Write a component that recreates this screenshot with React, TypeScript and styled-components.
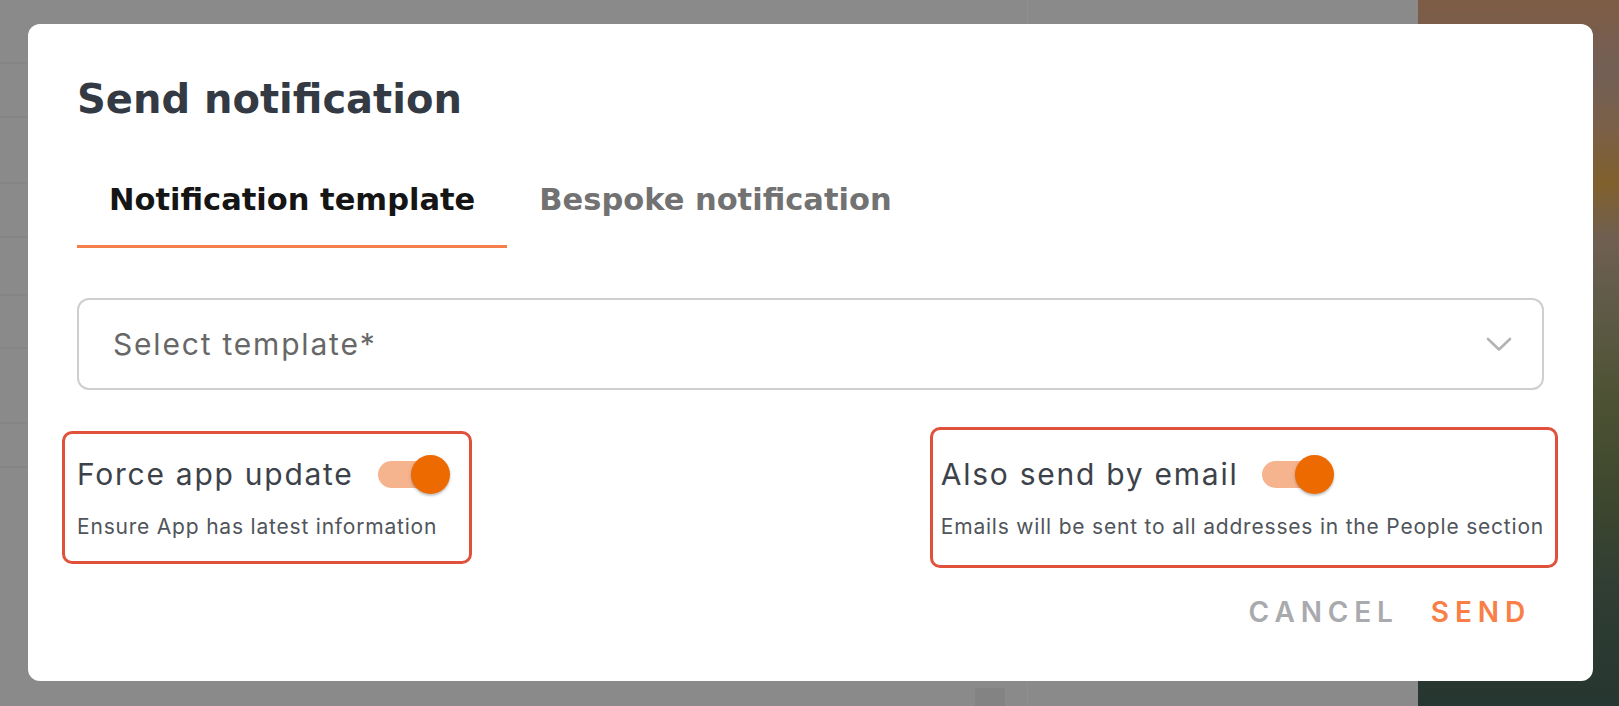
import React from "react";
import styled, { createGlobalStyle } from "styled-components";

const GlobalStyle = createGlobalStyle`
  html, body { margin: 0; padding: 0; height: 100%; overflow: hidden; }
  body { font-family: Inter, "Open Sans", sans-serif; }
  #root { height: 100%; }
  *, *::before, *::after { box-sizing: border-box; }
`;

const rowLine = (y: number) =>
  `linear-gradient(#858585, #858585) 0 ${y}px / 28px 2px no-repeat`;

const Backdrop = styled.div`
  width: 100vw;
  height: 100vh;
  display: flex;
  padding: 24px 26px 25px 28px;
  background:
    linear-gradient(
        to bottom,
        #7e5c45 0%,
        #725f55 10%,
        #7a6048 18%,
        #80602c 26%,
        #6f5f52 34%,
        #5e5a46 44%,
        #4e5234 56%,
        #40492e 68%,
        #2f3d33 84%,
        #263630 100%
      )
      right top / 201px 100% no-repeat,
    linear-gradient(#8f8f8f, #8f8f8f) 1027px 0 / 1px 100% no-repeat,
    linear-gradient(#838383, #838383) 975px 688px / 30px 18px no-repeat,
    ${rowLine(62)}, ${rowLine(116)}, ${rowLine(182)}, ${rowLine(236)},
    ${rowLine(294)}, ${rowLine(347)}, ${rowLine(422)}, ${rowLine(466)},
    #8a8a8a;
`;

const Dialog = styled.section`
  flex: 1;
  background: #ffffff;
  border-radius: 12px;
  padding: 52px 49px 0;
  display: flex;
  flex-direction: column;
`;

const Title = styled.h2`
  margin: 0;
  font-family: "DejaVu Sans", Verdana, sans-serif;
  font-size: 40px;
  line-height: 46px;
  font-weight: 700;
  color: #343a43;
`;

const Tabs = styled.div`
  display: flex;
  margin-top: 33px;
`;

const Tab = styled.button<{ $active?: boolean }>`
  border: 0;
  background: none;
  font-family: "DejaVu Sans", Verdana, sans-serif;
  cursor: pointer;
  padding: 28px 32px;
  font-size: 30.5px;
  line-height: 34px;
  font-weight: 700;
  color: ${(p) => (p.$active ? "#151515" : "#727272")};
  border-bottom: 3px solid ${(p) => (p.$active ? "#f57f4b" : "transparent")};
`;

const Select = styled.div`
  margin-top: 50px;
  height: 92px;
  display: flex;
  align-items: center;
  justify-content: space-between;
  padding: 0 30px 0 34px;
  border: 2px solid #cfcfcf;
  border-radius: 12px;
`;

const Placeholder = styled.span`
  font-size: 30px;
  letter-spacing: 0.06em;
  color: #676767;
`;

const Options = styled.div`
  display: flex;
  justify-content: space-between;
  align-items: center;
  margin: 37px -14px 0 -15px;
`;

const Highlight = styled.div<{ $pad: string }>`
  border: 3px solid #e0513c;
  border-radius: 10px;
  padding: ${(p) => p.$pad};
`;

const OptionHead = styled.div`
  display: flex;
  align-items: center;
  gap: 24px;
  height: 40px;
`;

const Label = styled.span`
  font-size: 30px;
  line-height: 40px;
  font-weight: 400;
  letter-spacing: 0.058em;
  color: #3d424a;
`;

const Helper = styled.div`
  margin-top: 19px;
  font-size: 21px;
  line-height: 28px;
  letter-spacing: 0.038em;
  color: #50545b;
`;

const Switch = styled.span`
  position: relative;
  display: inline-block;
  width: 72px;
  height: 39px;
`;

const Track = styled.span`
  position: absolute;
  left: 0;
  top: 6px;
  width: 65px;
  height: 27px;
  border-radius: 14px;
  background: #f5b48d;
`;

const Thumb = styled.span`
  position: absolute;
  left: 33px;
  top: 0;
  width: 39px;
  height: 39px;
  border-radius: 50%;
  background: #ec6a00;
  box-shadow: 0 2px 2px rgba(0, 0, 0, 0.18), 0 1px 4px rgba(0, 0, 0, 0.1);
`;

const Actions = styled.div`
  display: flex;
  justify-content: flex-end;
  gap: 4px;
  margin: 16px 0 0 0;
`;

const ActionButton = styled.button<{ $primary?: boolean }>`
  border: 0;
  background: none;
  cursor: pointer;
  font-family: inherit;
  padding: 11px 13px 11px 15px;
  font-size: 28px;
  line-height: 34px;
  font-weight: 600;
  letter-spacing: 0.21em;
  color: ${(p) => (p.$primary ? "#f97f47" : "#a8aaad")};
`;

const Chevron = () => (
  <svg width="26" height="15" viewBox="0 0 26 15" fill="none">
    <polyline
      points="2,2 13,12.5 24,2"
      stroke="#b3b3b3"
      strokeWidth="2.6"
      strokeLinecap="round"
      strokeLinejoin="round"
    />
  </svg>
);

const Toggle = () => (
  <Switch>
    <Track />
    <Thumb />
  </Switch>
);

export default function App() {
  return (
    <>
      <GlobalStyle />
      <Backdrop>
        <Dialog>
          <Title>Send notification</Title>
          <Tabs>
            <Tab $active>Notification template</Tab>
            <Tab>Bespoke notification</Tab>
          </Tabs>
          <Select>
            <Placeholder>Select template*</Placeholder>
            <Chevron />
          </Select>
          <Options>
            <Highlight $pad="20px 19px 20px 12px">
              <OptionHead>
                <Label>Force app update</Label>
                <Toggle />
              </OptionHead>
              <Helper>Ensure App has latest information</Helper>
            </Highlight>
            <Highlight $pad="24px 11px 24px 8px">
              <OptionHead>
                <Label>Also send by email</Label>
                <Toggle />
              </OptionHead>
              <Helper>Emails will be sent to all addresses in the People section</Helper>
            </Highlight>
          </Options>
          <Actions>
            <ActionButton>CANCEL</ActionButton>
            <ActionButton $primary>SEND</ActionButton>
          </Actions>
        </Dialog>
      </Backdrop>
    </>
  );
}
